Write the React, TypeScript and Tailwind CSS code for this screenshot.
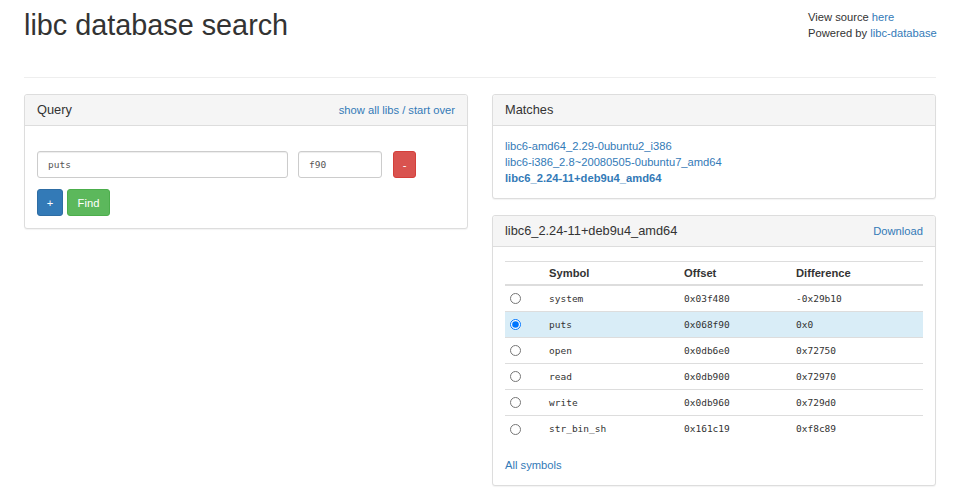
const sans = { fontFamily: '"Liberation Sans", Arial, sans-serif' };

interface SymbolRow {
  name: string;
  offset: string;
  diff: string;
  selected?: boolean;
}

const symbols: SymbolRow[] = [
  { name: "system", offset: "0x03f480", diff: "-0x29b10" },
  { name: "puts", offset: "0x068f90", diff: "0x0", selected: true },
  { name: "open", offset: "0x0db6e0", diff: "0x72750" },
  { name: "read", offset: "0x0db900", diff: "0x72970" },
  { name: "write", offset: "0x0db960", diff: "0x729d0" },
  { name: "str_bin_sh", offset: "0x161c19", diff: "0xf8c89" },
];

const matches = [
  { name: "libc6-amd64_2.29-0ubuntu2_i386" },
  { name: "libc6-i386_2.8~20080505-0ubuntu7_amd64" },
  { name: "libc6_2.24-11+deb9u4_amd64", bold: true },
];

const mono = "font-['DejaVu_Sans_Mono',monospace] text-[9.5px]";

const Panel = ({ title, right, children }: { title: string; right?: React.ReactNode; children: React.ReactNode }) => (
  <div className="border border-[#ddd] rounded-[3px] bg-white shadow-[0_1px_1px_rgba(0,0,0,0.05)]">
    <div className="h-[31px] px-[12px] flex items-center justify-between bg-[#f5f5f5] border-b border-[#ddd] rounded-t-[3px]">
      <span className="text-[12.8px] text-[#333]">{title}</span>
      {right}
    </div>
    <div className="p-[12px]">{children}</div>
  </div>
);

const Radio = ({ checked }: { checked?: boolean }) => (
  <input type="radio" name="sym" defaultChecked={checked} className="w-[11px] h-[11px] m-0 ml-[5px]" />
);

export default function App() {
  return (
    <div className="min-h-screen bg-white text-[#333] text-[11.2px] leading-[16px]" style={sans}>
      <div className="w-[912px] mx-auto">
        {/* header */}
        <div className="pt-[9px] flex items-start justify-between">
          <h1 className="text-[28.8px] leading-[32px] text-[#333]">libc database search</h1>
          <div className="w-[128px] whitespace-nowrap">
            <div>
              View source <a className="text-[#337ab7]">here</a>
            </div>
            <div>
              Powered by <a className="text-[#337ab7]">libc-database</a>
            </div>
          </div>
        </div>
        <hr className="mt-[36px] border-0 border-t border-[#eee]" />

        <div className="mt-[16px] grid grid-cols-2 gap-[24px] items-start">
          {/* query */}
          <Panel title="Query" right={<a className="text-[#337ab7]">show all libs / start over</a>}>
            <div className="pt-[13px] flex items-center">
              <div className={`w-[251px] h-[27px] px-[10px] flex items-center border border-[#ccc] rounded-[3px] shadow-[inset_0_1px_1px_rgba(0,0,0,0.075)] text-[#555] ${mono}`}>
                puts
              </div>
              <div className={`ml-[10px] w-[84px] h-[27px] px-[10px] flex items-center border border-[#ccc] rounded-[3px] shadow-[inset_0_1px_1px_rgba(0,0,0,0.075)] text-[#555] ${mono}`}>
                f90
              </div>
              <button className="ml-[11px] w-[23px] h-[27px] bg-[#d9534f] border border-[#d43f3a] rounded-[3px] text-white">
                -
              </button>
            </div>
            <div className="mt-[11px] flex gap-[4px]">
              <button className="w-[26px] h-[27px] bg-[#337ab7] border border-[#2e6da4] rounded-[3px] text-white">+</button>
              <button className="w-[43px] h-[27px] bg-[#5cb85c] border border-[#4cae4c] rounded-[3px] text-white">Find</button>
            </div>
          </Panel>

          <div className="flex flex-col gap-[16px]">
            <Panel title="Matches">
              {matches.map((m) => (
                <div key={m.name}>
                  <a className={`text-[#337ab7] ${m.bold ? "font-bold" : ""}`}>{m.name}</a>
                </div>
              ))}
            </Panel>

            <Panel title="libc6_2.24-11+deb9u4_amd64" right={<a className="text-[#337ab7]">Download</a>}>
              <div className="mt-[2px] border-t border-[#ddd]">
                <div className="grid grid-cols-[40px_135px_112px_1fr] h-[24px] items-center border-b-2 border-[#ddd] font-bold">
                  <div />
                  <div className="px-[4px]">Symbol</div>
                  <div className="px-[4px]">Offset</div>
                  <div className="px-[4px]">Difference</div>
                </div>
                {symbols.map((s, i) => (
                  <div
                    key={s.name}
                    className={`grid grid-cols-[40px_135px_112px_1fr] h-[26px] items-center ${i < symbols.length - 1 ? "border-b border-[#ddd]" : ""} ${s.selected ? "bg-[#d9edf7]" : ""}`}
                  >
                    <div className="flex items-center">
                      <Radio checked={s.selected} />
                    </div>
                    <div className={`px-[4px] ${mono}`}>{s.name}</div>
                    <div className={`px-[4px] ${mono}`}>{s.offset}</div>
                    <div className={`px-[4px] ${mono}`}>{s.diff}</div>
                  </div>
                ))}
              </div>
              <div className="mt-[15px]">
                <a className="text-[#337ab7]">All symbols</a>
              </div>
            </Panel>
          </div>
        </div>
      </div>
    </div>
  );
}
